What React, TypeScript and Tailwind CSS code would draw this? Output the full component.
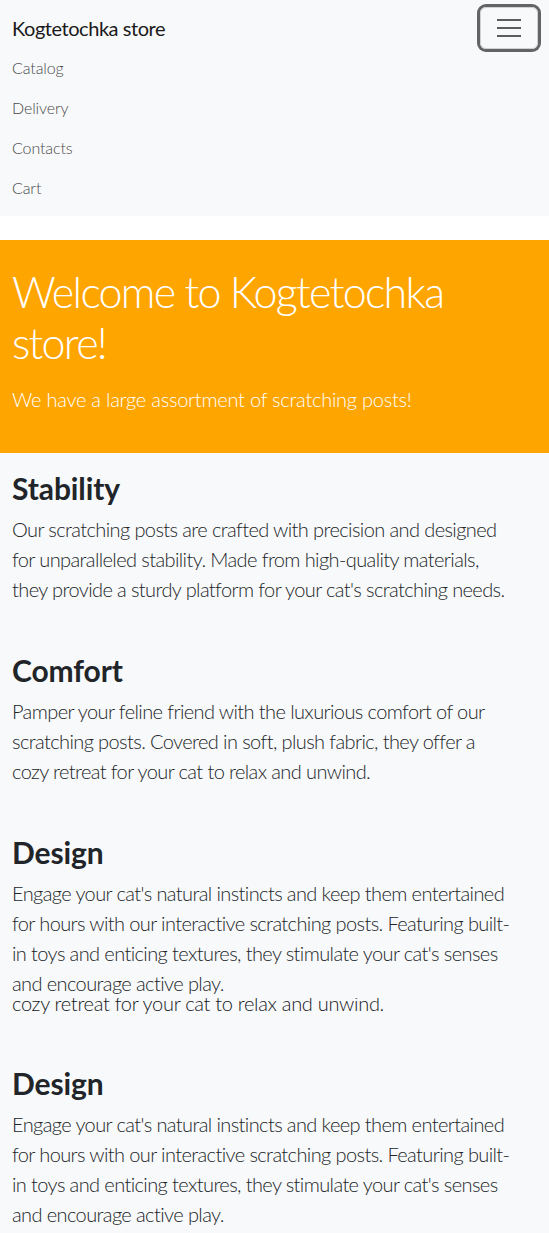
const body = '"Lato", "Segoe UI", sans-serif';

function Section({ title, lines, children }: { title: string; lines: string[]; children?: React.ReactNode }) {
  return (
    <section className="flex flex-col">
      <h2 className="text-[30px] leading-[36px] font-bold text-[#212529] tracking-[-0.1px]">{title}</h2>
      <p className="mt-2 text-[20px] leading-[30px] font-light text-[#212529] tracking-[-0.6px]">
        {lines.map((l, i) => (
          <span key={i} className="block whitespace-nowrap">
            {l}
          </span>
        ))}
      </p>
      {children}
    </section>
  );
}

export default function App() {
  return (
    <div className="min-h-[1233px] bg-white" style={{ fontFamily: body }}>
      <nav className="bg-[#f8f9fa] px-3 pt-2 pb-2">
        <div className="flex h-[40px] items-center justify-between">
          <span className="text-[20px] leading-[30px] text-[#1a1a1a] tracking-[-0.45px]">Kogtetochka store</span>
          <button className="mr-[-1px] flex h-[42px] w-[58px] flex-col items-center justify-center gap-[6px] rounded-[6px] border border-[#d0d0d0] ring-[3px] ring-[#646464]">
            <span className="block h-[2px] w-[24px] bg-[#5a5c5f]"></span>
            <span className="block h-[2px] w-[24px] bg-[#5a5c5f]"></span>
            <span className="block h-[2px] w-[24px] bg-[#5a5c5f]"></span>
          </button>
        </div>
        <ul className="flex flex-col">
          {['Catalog', 'Delivery', 'Contacts', 'Cart'].map((t) => (
            <li key={t} className="py-2 text-[16px] leading-[24px] font-light text-[#4a4a4a] tracking-[-0.1px]">
              {t}
            </li>
          ))}
        </ul>
      </nav>

      <div className="mt-6 bg-[#ffa500] px-3 pt-[26px] pb-[39px] text-white">
        <h1 className="text-[43px] leading-[51px] font-light tracking-[-1.7px]">
          Welcome to Kogtetochka
          <br />
          store!
        </h1>
        <p className="mt-4 text-[20px] leading-[30px] font-light tracking-[-0.25px]">
          We have a large assortment of scratching posts!
        </p>
      </div>

      <main className="flex flex-col gap-12 bg-[#f8f9fa] px-3 pt-[17px] pb-10">
        <Section
          title="Stability"
          lines={[
            'Our scratching posts are crafted with precision and designed',
            'for unparalleled stability. Made from high-quality materials,',
            "they provide a sturdy platform for your cat's scratching needs.",
          ]}
        />
        <Section
          title="Comfort"
          lines={[
            'Pamper your feline friend with the luxurious comfort of our',
            'scratching posts. Covered in soft, plush fabric, they offer a',
            'cozy retreat for your cat to relax and unwind.',
          ]}
        />
        <Section
          title="Design"
          lines={[
            "Engage your cat's natural instincts and keep them entertained",
            'for hours with our interactive scratching posts. Featuring built-',
            "in toys and enticing textures, they stimulate your cat's senses",
            'and encourage active play.',
          ]}
        >
          <div className="h-[20px] overflow-hidden">
            <div className="-mt-[10px] text-[20px] leading-[30px] font-light text-[#15181b] tracking-[-0.3px] whitespace-nowrap">
              cozy retreat for your cat to relax and unwind.
            </div>
          </div>
        </Section>
        <div className="-mt-[1px]">
          <Section
            title="Design"
            lines={[
              "Engage your cat's natural instincts and keep them entertained",
              'for hours with our interactive scratching posts. Featuring built-',
              "in toys and enticing textures, they stimulate your cat's senses",
              'and encourage active play.',
            ]}
          />
        </div>
      </main>
    </div>
  );
}
